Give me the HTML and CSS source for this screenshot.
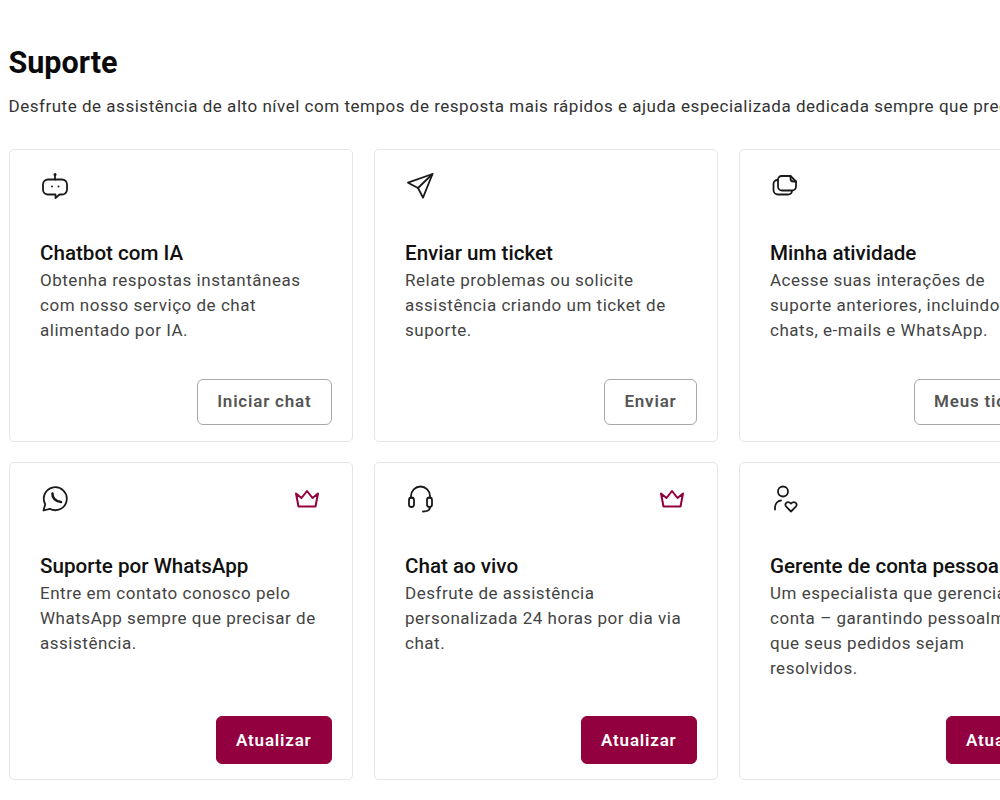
FILE: index.html
```
<!DOCTYPE html>
<html lang="pt">
<head>
<meta charset="utf-8">
<title>Suporte</title>
<link rel="stylesheet" href="styles.css">
</head>
<body>
<main class="page">
  <h1 class="title">Suporte</h1>
  <p class="subtitle">Desfrute de assistência de alto nível com tempos de resposta mais rápidos e ajuda especializada dedicada sempre que precisar.</p>
  <div class="grid">
    <section class="card">
      <div class="top">
        <svg class="icon" viewBox="0 0 28 28"><path d="M14 7.500V3"/><circle cx="14" cy="2.500" r="1.500" class="fill"/><path d="M7 7.500h14a5 5 0 0 1 5 5v5a5 5 0 0 1-5 5h-2.500l-4 3.500v-3.500H7a5 5 0 0 1-5-5v-5a5 5 0 0 1 5-5z"/><circle cx="11" cy="14.500" r="1" class="fill"/><circle cx="17.500" cy="14.500" r="1" class="fill"/></svg>
      </div>
      <h2 class="name">Chatbot com IA</h2>
      <p class="desc">Obtenha respostas instantâneas com nosso serviço de chat alimentado por IA.</p>
      <div class="actions"><button class="btn outline">Iniciar chat</button></div>
    </section>
    <section class="card">
      <div class="top">
        <svg class="icon" viewBox="0 0 28 28"><path d="M26.500 2 2 10.700 12 16l5 9.600z"/><path d="M26.500 2 12 16"/></svg>
      </div>
      <h2 class="name">Enviar um ticket</h2>
      <p class="desc">Relate problemas ou solicite assistência criando um ticket de suporte.</p>
      <div class="actions"><button class="btn outline">Enviar</button></div>
    </section>
    <section class="card">
      <div class="top">
        <svg class="icon" viewBox="0 0 28 28"><path d="M10.500 4h9l5.500 5.500v5a4 4 0 0 1-4 4H11a4 4 0 0 1-4-4v-7A3.500 3.500 0 0 1 10.500 4z"/><path d="M19.500 4v2.500a3 3 0 0 0 3 3H25"/><path d="M6.500 8a4 4 0 0 0-4 4v6A4.500 4.500 0 0 0 7 22.500h10a4 4 0 0 0 4-3.500"/></svg>
      </div>
      <h2 class="name">Minha atividade</h2>
      <p class="desc">Acesse suas interações de suporte anteriores, incluindo chats, e-mails e WhatsApp.</p>
      <div class="actions"><button class="btn outline">Meus tickets</button></div>
    </section>
    <section class="card">
      <div class="top">
        <svg class="icon" viewBox="0 0 28 28"><path d="M2.500 25.500 4.200 19.200A11.500 11.500 0 1 1 8.800 23.800z"/><path class="phone" d="M11.500 8.500c-.5 4 3 8 8.500 8.500"/></svg>
        <svg class="crown" viewBox="0 0 26 20"><path d="M2 4.500 7.500 9 13 2l5.500 7L24 4.500 21.500 17.500H4.500z"/></svg>
      </div>
      <h2 class="name">Suporte por WhatsApp</h2>
      <p class="desc">Entre em contato conosco pelo WhatsApp sempre que precisar de assistência.</p>
      <div class="actions"><button class="btn solid">Atualizar</button></div>
    </section>
    <section class="card">
      <div class="top">
        <svg class="icon" viewBox="0 0 28 28"><path d="M5 13v-2a9.500 9.500 0 0 1 19 0v2"/><rect x="3" y="12.500" width="5" height="9.500" rx="2.500"/><rect x="21" y="12.500" width="5" height="9.500" rx="2.500"/><path d="M24 22c0 3-3 4.500-7 4.500"/></svg>
        <svg class="crown" viewBox="0 0 26 20"><path d="M2 4.500 7.500 9 13 2l5.500 7L24 4.500 21.500 17.500H4.500z"/></svg>
      </div>
      <h2 class="name">Chat ao vivo</h2>
      <p class="desc">Desfrute de assistência personalizada 24 horas por dia via chat.</p>
      <div class="actions"><button class="btn solid">Atualizar</button></div>
    </section>
    <section class="card">
      <div class="top">
        <svg class="icon" viewBox="0 0 28 28"><circle cx="12" cy="6.500" r="5"/><path d="M4 24.500V22a7 7 0 0 1 6-6.500"/><path d="M20 26.500l-4.800-4.800c-2.500-2.600 1-6.600 4.800-3.200 3.800-3.400 7.300.6 4.800 3.200z"/></svg>
      </div>
      <h2 class="name">Gerente de conta pessoal</h2>
      <p class="desc">Um especialista que gerencia sua conta – garantindo pessoalmente que seus pedidos sejam resolvidos.</p>
      <div class="actions"><button class="btn solid">Atualizar</button></div>
    </section>
  </div>
</main>
</body>
</html>
```
FILE: styles.css
```
* { box-sizing: border-box; }
html, body { margin: 0; height: 800px; overflow: hidden; background: #fff; }
body { font-family: Roboto, "Liberation Sans", sans-serif; color: #0a0a0a; }
.page { width: 1100px; padding: 45px 0 0 8.500px; }
.title { margin: 0; font-size: 30.500px; line-height: 36px; font-weight: 700; }
.subtitle { margin: 13px 0 0; font-size: 17px; line-height: 24px; letter-spacing: .52px; color: #333; white-space: nowrap; }
.grid { display: grid; grid-template-columns: repeat(3, 344.500px); grid-template-rows: 292.500px 317.500px; gap: 20.500px; margin-top: 31px; }
.card { display: flex; flex-direction: column; padding: 22px 20px 15px 30.500px; border: 1px solid #e6e6e6; border-radius: 5px; background: #fff; }
.top { display: flex; justify-content: space-between; height: 28px; padding-right: 12px; }
.icon { width: 28px; height: 28px; margin-left: 1px; fill: none; stroke: #1a1a1a; stroke-width: 1.800; stroke-linecap: round; stroke-linejoin: round; }
.icon .fill { fill: #1a1a1a; stroke: none; }
.icon .phone { stroke-width: 2.600; }
.crown { width: 26px; height: 20px; margin-top: 4px; fill: none; stroke: #93003f; stroke-width: 2; stroke-linejoin: round; }
.name { margin: 39.500px 0 0; font-size: 20.600px; line-height: 26px; font-weight: 500; color: #111; }
.desc { margin: 2px 14px 0 0; font-size: 17px; line-height: 25.300px; letter-spacing: .52px; color: #444; }
.actions { margin-top: auto; display: flex; justify-content: flex-end; }
.btn { padding: 0 19.500px; border-radius: 6px; font-family: Roboto, "Liberation Sans", sans-serif; font-size: 17px; font-weight: 600; letter-spacing: .8px; }
.outline { height: 46px; margin-bottom: 1px; padding-bottom: 2px; background: #fff; border: 1px solid #a8a8a8; color: #555; }
.solid { height: 47.500px; background: #93003f; border: 1px solid #93003f; color: #fff; }
```
